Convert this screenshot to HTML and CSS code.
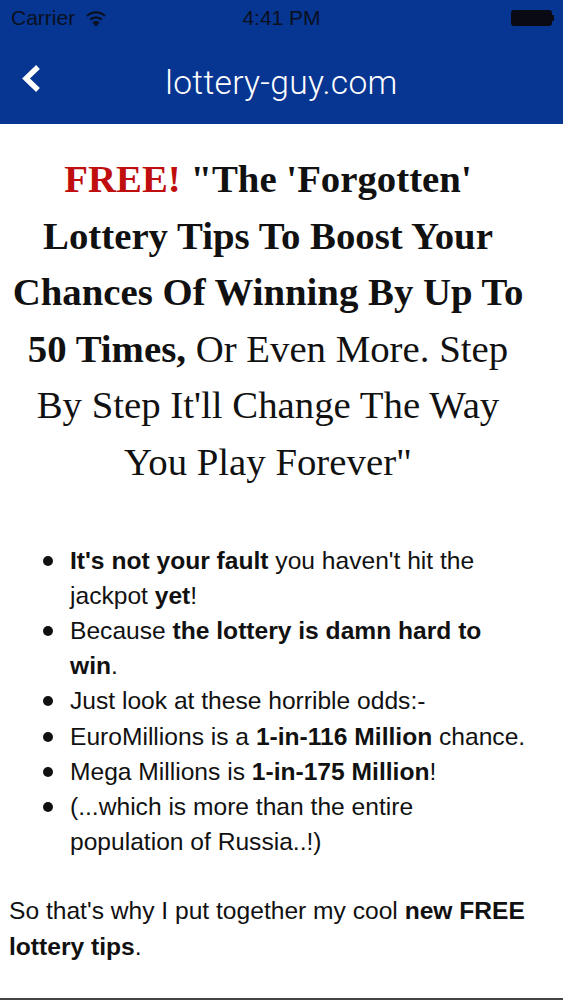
FILE: index.html
```html
<!DOCTYPE html>
<html lang="en">
<head>
<meta charset="utf-8">
<title>lottery-guy.com</title>
<link rel="stylesheet" href="styles.css">
</head>
<body>
<header class="top">
  <div class="status">
    <div class="status-left">
      <span>Carrier</span>
      <svg class="wifi" width="22" height="17" viewBox="0 0 22 17"><path d="M11 16.5 L7.4 12.4 A5.2 5.2 0 0 1 14.6 12.4 Z" fill="#0a1020"/><path d="M5.2 9.6 A8.4 8.4 0 0 1 16.8 9.6" fill="none" stroke="#0a1020" stroke-width="2.2"/><path d="M2 6 A13 13 0 0 1 20 6" fill="none" stroke="#0a1020" stroke-width="2.2"/></svg>
    </div>
    <div class="time">4:41 PM</div>
    <div class="battery"><div class="battery-body"></div><div class="battery-cap"></div></div>
  </div>
  <div class="nav">
    <svg class="back" width="24" height="30" viewBox="0 0 24 30"><path d="M19 3 L7 14.5 L19 26" fill="none" stroke="#fff" stroke-width="5.4"/></svg>
    <div class="title">lottery-guy.com</div>
  </div>
</header>
<main>
  <h1 class="headline"><span class="red">FREE!</span> "The 'Forgotten' Lottery Tips To Boost Your Chances Of Winning By Up To 50 Times, <span class="light">Or Even More. Step By Step It'll Change The Way You Play Forever"</span></h1>
  <ul class="points">
    <li><span><b>It's not your fault</b> you haven't hit the jackpot <b>yet</b>!</span></li>
    <li><span>Because <b>the lottery is damn hard to win</b>.</span></li>
    <li><span>Just look at these horrible odds:-</span></li>
    <li><span>EuroMillions is a <b>1-in-116 Million</b> chance.</span></li>
    <li><span>Mega Millions is <b>1-in-175 Million</b>!</span></li>
    <li><span>(...which is more than the entire population of Russia..!)</span></li>
  </ul>
  <p class="outro">So that's why I put together my cool <b>new FREE lottery tips</b>.</p>
</main>
</body>
</html>
```
FILE: styles.css
```css
* { box-sizing: border-box; }
html, body { margin: 0; padding: 0; background: #fff; }
body { width: 563px; height: 1000px; overflow: hidden; font-family: "Liberation Sans", Arial, sans-serif; color: #111; display: flex; flex-direction: column; border-bottom: 2px solid #444; }
.top { background: #073592; height: 124px; display: flex; flex-direction: column; flex: none; }
.status { height: 38px; display: flex; align-items: center; justify-content: space-between; padding: 0 9px 2px 11px; font-size: 21px; color: #0a1020; position: relative; }
.status-left { display: flex; align-items: center; gap: 10px; }
.time { position: absolute; left: 0; right: 0; text-align: center; }
.battery { display: flex; align-items: center; }
.battery-body { width: 41px; height: 16px; background: #0a0a14; border-radius: 3px; }
.battery-cap { width: 2px; height: 6px; background: #0a0a14; }
.nav { flex: 1; display: flex; align-items: center; justify-content: center; position: relative; padding-top: 2px; }
.back { position: absolute; left: 19px; top: 26px; }
.title { color: #fff; font-family: Roboto, "Liberation Sans", sans-serif; font-weight: 300; font-size: 33.6px; letter-spacing: 0.3px; }
.headline { margin: 27px 0 0; padding: 0 35px 0 8px; text-align: center; font-family: "Liberation Serif", "Times New Roman", serif; font-size: 38.8px; line-height: 56.6px; font-weight: bold; color: #111; }
.red { color: #c00d0d; }
.light { font-weight: normal; }
.points { list-style: none; margin: 52px 0 0; padding: 0 33px 0 43px; font-size: 24.6px; line-height: 35.2px; }
.points li { display: flex; align-items: flex-start; }
.points li::before { content: ""; flex: none; width: 10px; height: 10px; margin: 13px 17px 0 0; border-radius: 50%; background: #111; }
.outro { margin: 34px 0 0; padding: 0 9px; font-size: 24.6px; line-height: 35.2px; }
```
